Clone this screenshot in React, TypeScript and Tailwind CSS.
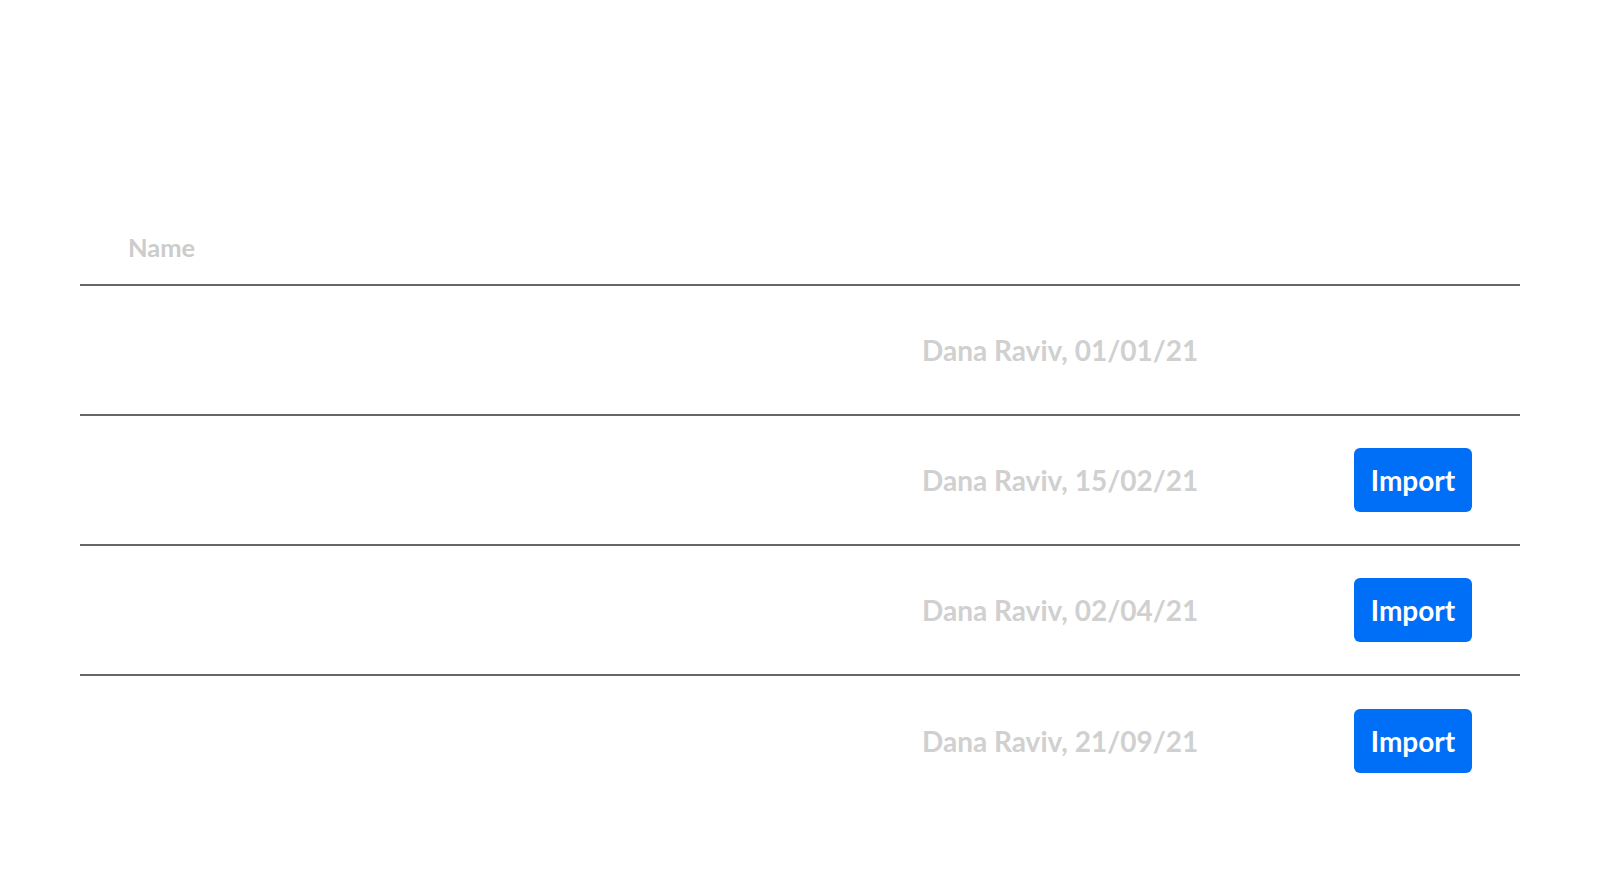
import React from "react";

const rows = [
  { label: "Dana Raviv, 01/01/21", button: false },
  { label: "Dana Raviv, 15/02/21", button: true },
  { label: "Dana Raviv, 02/04/21", button: true },
  { label: "Dana Raviv, 21/09/21", button: true },
];

export default function App() {
  return (
    <div
      className="min-h-[884px] w-full bg-white"
      style={{ fontFamily: "Lato, 'Open Sans', sans-serif" }}
    >
      <div className="mx-[80px] pt-[214px]">
        <div className="flex h-[72px] items-center border-b-2 border-[#666666] pb-[4px] pl-[48px]">
          <span className="text-[25.5px] font-bold text-[#cccccc]">Name</span>
        </div>
        {rows.map((r, i) => (
          <div
            key={i}
            className={`grid h-[130px] grid-cols-[842px_1fr_auto] items-center pr-[48px] ${
              i < rows.length - 1 ? "border-b-2 border-[#666666]" : ""
            }`}
          >
            <div />
            <span className="text-[28px] font-bold text-[#d0d0d0]">{r.label}</span>
            {r.button ? (
              <button className="flex h-[64px] w-[118px] items-center justify-center rounded-[6px] bg-[#006ff8] text-[28px] font-bold text-white">
                Import
              </button>
            ) : (
              <div className="h-[64px] w-[118px]" />
            )}
          </div>
        ))}
      </div>
    </div>
  );
}
